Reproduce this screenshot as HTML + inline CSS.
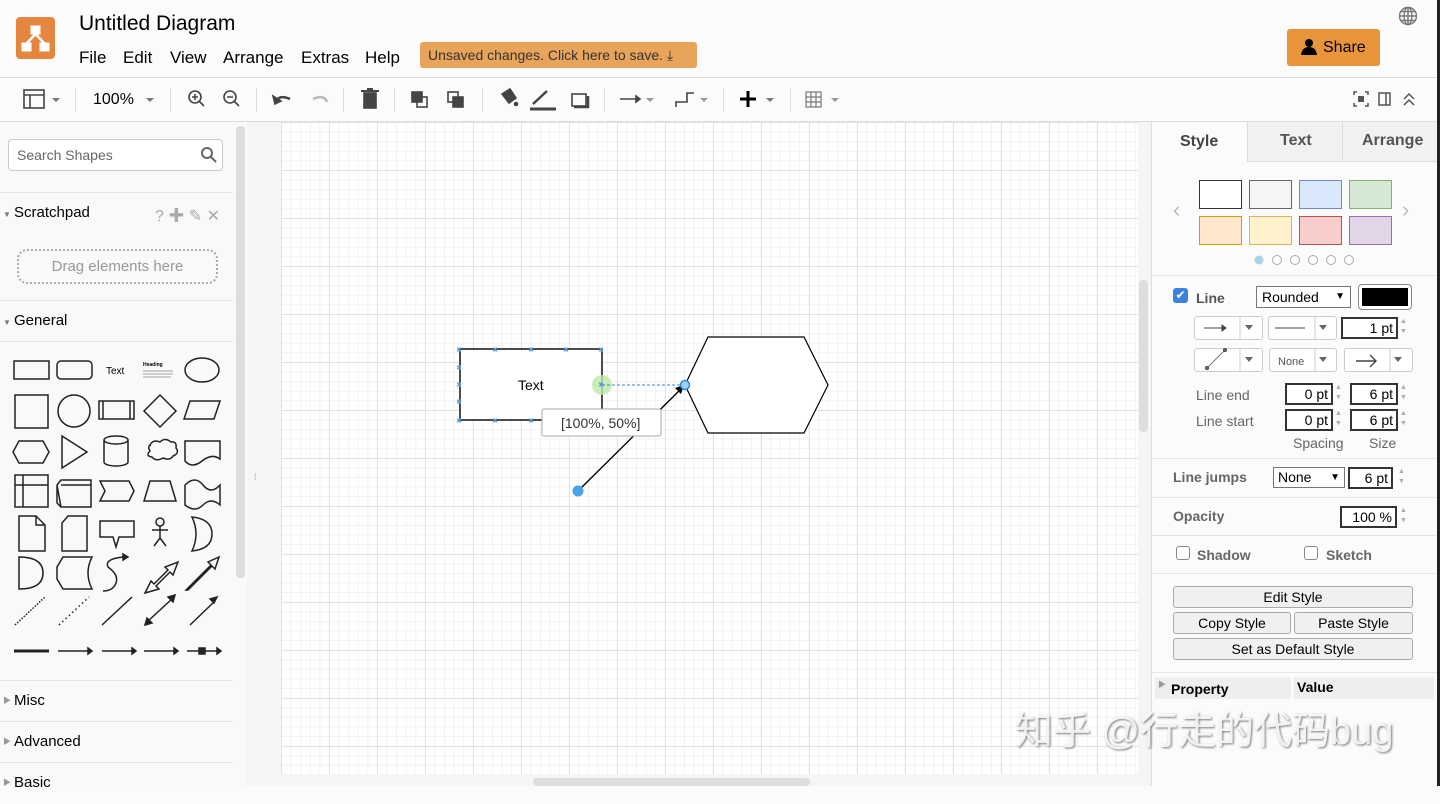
<!DOCTYPE html>
<html><head><meta charset="utf-8"><style>
*{box-sizing:border-box;margin:0;padding:0}
body{width:1440px;height:786px;overflow:hidden;background:#fbfbfb;font-family:"Liberation Sans","Noto Sans CJK SC",sans-serif;position:relative;color:#000}
.a{position:absolute}
.menu span{position:absolute;top:48px;font-size:17px}
.tb{position:absolute;top:77px;left:0;width:1440px;height:45px;border-top:1px solid #ddd;border-bottom:1px solid #ddd;background:#fbfbfb}
.sep{position:absolute;top:88px;width:1px;height:24px;background:#ddd}
.pt{position:absolute;height:22px;border:2px solid #333;background:#fff;font-size:14px;text-align:right;padding:1px 3px;line-height:16px}
.spin{position:absolute;width:10px;height:22px;font-size:7px;color:#aaa;line-height:10px}
.btn{position:absolute;height:22px;border:1px solid #aaa;border-radius:3px;background:#f0f0f0;font-size:14px;text-align:center;line-height:20px}
.dd{position:absolute;height:24px;border:1px solid #ccc;border-radius:3px;background:#fff}
.lbl{position:absolute;font-size:14px;color:#666}
.hd{position:absolute;left:0;width:233px;border-top:1px solid #e5e5e5;font-size:15px;padding-left:14px}
</style></head><body>
<!-- header -->
<div class="a" style="left:16px;top:17px;width:39px;height:42px;background:#e5863f;border-radius:4px"></div>
<svg class="a" style="left:16px;top:17px" width="39" height="42"><g fill="#fff" stroke="#fff"><rect x="15" y="9" width="9" height="8"/><rect x="6" y="26" width="9" height="8"/><rect x="24" y="26" width="9" height="8"/><path d="M19.5 17 L10 27 M19.5 17 L29 27" stroke-width="2.5" fill="none"/></g></svg>
<div class="a" style="left:79px;top:12px;font-size:21px">Untitled Diagram</div>
<div class="menu"><span style="left:79px">File</span><span style="left:123px">Edit</span><span style="left:170px">View</span><span style="left:223px">Arrange</span><span style="left:301px">Extras</span><span style="left:365px">Help</span></div>
<div class="a" style="left:420px;top:42px;width:277px;height:26px;background:#e8a45a;border-radius:3px;font-size:14px;color:#333;line-height:26px;padding-left:8px">Unsaved changes. Click here to save. ⤓</div>
<svg class="a" style="left:1398px;top:6px" width="20" height="20"><g fill="none" stroke="#777" stroke-width="1.4"><circle cx="10" cy="10" r="8.5"/><ellipse cx="10" cy="10" rx="4" ry="8.5"/><path d="M1.5 10h17M3 5.5h14M3 14.5h14M10 1.5v17"/></g></svg>
<div class="a" style="left:1287px;top:29px;width:93px;height:37px;background:#e8943b;border-radius:3px;font-size:16px;line-height:37px;padding-left:36px">Share</div>
<svg class="a" style="left:1300px;top:38px" width="18" height="18"><circle cx="9" cy="5" r="4"/><path d="M1 17 Q2 9 9 9 Q16 9 17 17Z"/></svg>
<!-- toolbar -->
<div class="tb"></div>
<svg class="a" style="left:0;top:78px" width="860" height="44" fill="none" stroke="#444" stroke-width="1.6">
<rect x="24" y="12" width="20" height="18"/><path d="M24 17h20M30 17v13"/><path d="M52 20l4 4 4-4z" fill="#777" stroke="none"/>
<path d="M146 20l4 4 4-4z" fill="#777" stroke="none"/>
<circle cx="195" cy="19" r="6"/><path d="M199 23l5 5M192 19h6M195 16v6"/>
<circle cx="230" cy="19" r="6"/><path d="M234 23l5 5M227 19h6"/>
<path d="M276 24q3-8 14-3" stroke-width="2.5"/><path d="M273 18l2 8 6-3z" fill="#444"/>
<path d="M327 24q-3-8-14-3" stroke="#bbb" stroke-width="2.5"/>
<rect x="364" y="15" width="12" height="15" fill="#444"/><path d="M361 13h18M367 11h6" stroke-width="2"/>
<rect x="412" y="14" width="10" height="10" fill="#444"/><rect x="417" y="19" width="10" height="10"/>
<rect x="448" y="14" width="10" height="10"/><rect x="453" y="19" width="10" height="10" fill="#444"/>
<path d="M502 16l8 -5 6 9-7 5z" fill="#444"/><circle cx="516" cy="26" r="1.5" fill="#444"/>
<path d="M533 26l14-13" stroke-width="2.5"/><path d="M530 31h26" stroke-width="3"/>
<rect x="572" y="16" width="14" height="12"/><path d="M574 29h14v-11" stroke-width="2.5"/>
<path d="M620 21h18"/><path d="M636 18l4 3-4 3z" fill="#444"/><path d="M646 20l4 4 4-4z" fill="#999" stroke="none"/>
<path d="M676 29v-5h11v-9h7"/><path d="M700 20l4 4 4-4z" fill="#999" stroke="none"/>
<path d="M748 13v16M740 21h16" stroke="#000" stroke-width="3"/><path d="M766 20l4 4 4-4z" fill="#777" stroke="none"/>
<rect x="806" y="14" width="15" height="15" stroke="#777" stroke-width="1.2"/><path d="M806 19h15M806 24h15M811 14v15M816 14v15" stroke="#777" stroke-width="1.2"/><path d="M831 20l4 4 4-4z" fill="#999" stroke="none"/>
</svg>
<div class="a" style="left:93px;top:91px;font-size:16px">100%</div>
<div class="sep" style="left:75px"></div><div class="sep" style="left:170px"></div><div class="sep" style="left:256px"></div><div class="sep" style="left:343px"></div><div class="sep" style="left:394px"></div><div class="sep" style="left:482px"></div><div class="sep" style="left:604px"></div><div class="sep" style="left:723px"></div><div class="sep" style="left:790px"></div>
<svg class="a" style="left:1350px;top:88px" width="70" height="22" fill="none" stroke="#555" stroke-width="1.5"><path d="M4 7V4h3M15 4h3v3M18 15v3h-3M7 18H4v-3"/><rect x="8" y="8" width="6" height="6" fill="#555" stroke="none"/><rect x="29" y="5" width="11" height="12"/><path d="M36 5v12"/><path d="M54 11l5-5 5 5M54 17l5-5 5 5"/></svg>
<!-- left sidebar -->
<div class="a" style="left:0;top:122px;width:247px;height:664px;background:#f8f9fb"></div>
<div class="a" style="left:236px;top:126px;width:9px;height:452px;background:#ddd;border-radius:4px"></div>
<div class="a" style="left:8px;top:139px;width:215px;height:32px;border:1px solid #ccc;border-radius:4px;background:#fff;font-size:14px;color:#666;line-height:30px;padding-left:8px">Search Shapes</div>
<svg class="a" style="left:200px;top:146px" width="18" height="18" fill="none" stroke="#666" stroke-width="2"><circle cx="7" cy="7" r="5"/><path d="M11 11l5 5"/></svg>
<div class="hd" style="top:192px;height:42px;line-height:40px">Scratchpad</div>
<div class="a" style="left:3px;top:210px;font-size:8px;color:#777">▼</div>
<div class="a" style="left:155px;top:202px;font-size:16px;color:#aaa">? ✚ ✎ ✕</div>
<div class="a" style="left:17px;top:249px;width:201px;height:35px;border:2px dotted #aaa;border-radius:10px;font-size:15px;color:#999;text-align:center;line-height:31px">Drag elements here</div>
<div class="hd" style="top:300px;height:42px;line-height:40px">General</div>
<div class="a" style="left:3px;top:318px;font-size:8px;color:#777">▼</div>
<div class="hd" style="top:341px;height:1px"></div>
<svg class="a" style="left:0;top:345px" width="233" height="325" fill="none" stroke="#222" stroke-width="1.5">
<rect x="14" y="16" width="35" height="18"/><rect x="57" y="16" width="35" height="18" rx="4"/><text x="106" y="29" font-size="10" fill="#000" stroke="none" font-family="Liberation Sans">Text</text><text x="143" y="21" font-size="5" fill="#000" stroke="none" font-family="Liberation Sans" font-weight="bold">Heading</text><path d="M143 26h30M143 29h30M143 32h28" stroke-width="0.7" stroke="#888"/><ellipse cx="202" cy="25" rx="17" ry="12"/>
<rect x="15" y="50" width="33" height="33"/><circle cx="74" cy="66" r="16"/><rect x="99" y="56" width="35" height="18"/><path d="M103 56v18M130 56v18"/><path d="M160 50l16 16-16 16-16-16z"/><path d="M190 56h30l-6 18h-30z"/>
<path d="M19 96h24l6 11-6 11H19l-6-11z"/><path d="M62 91l25 16-25 16z"/><path d="M104 95a12 4 0 0 1 24 0v22a12 4 0 0 1-24 0z M104 95a12 4 0 0 0 24 0"/><path d="M150 100q3-6 10-3 5-5 11 0 6-1 5 6 4 5-3 8-3 5-10 2-7 4-11-1-7-1-2-6-3-5 1-6z"/><path d="M185 96h35v18q-8-6-18 2t-17 0z"/>
<rect x="15" y="130" width="33" height="32"/><path d="M15 140h33M23 130v32"/><path d="M57 140l4-5h30v27H61z M57 140v18l4 4M61 140h30"/><path d="M100 136h29l5 10-5 10h-29l5-10z"/><path d="M150 136h20l6 20h-32z"/><path d="M185 140q10-10 18 0t17 0v20q-9-8-17 0t-18 0z"/>
<path d="M19 171h17l9 9v26H19z M36 171v9h9"/><path d="M68 171h19v35H62v-28z"/><path d="M100 176h34v16h-15l-3 10-3-10h-13z"/><circle cx="160" cy="177" r="4"/><path d="M160 181v12M152 185h16M160 193l-6 8M160 193l6 8"/><path d="M192 172q20 2 20 17t-20 17q8-17 0-34z"/>
<path d="M19 212q24 0 24 16t-24 16z"/><path d="M63 212h29q-8 16 0 32H63l-6-10v-12z"/><path d="M103 246q10 0 13-8t-8-16q-4-8 15-10" /><path d="M123 209l5 3-5 3z" fill="#222"/><path d="M145 248l6-12 3 3 14-14-3-3 13-5-5 13-3-3-14 14 3 3z"/><path d="M186 245l25-25-3-3 11-5-4 12-3-3-24 24z"/>
<path d="M15 280l30-28" stroke-dasharray="1.5 1.5"/><path d="M59 280l30-28" stroke-dasharray="1.5 3"/><path d="M102 280l30-28"/><path d="M147 277l26-24"/><path d="M145 280l2-7 5 5zM175 250l-2 7-5-5z" fill="#222"/><path d="M190 280l25-24"/><path d="M217 252l-7 2 4 4z" fill="#222"/>
<path d="M14 306h35" stroke-width="3"/><path d="M58 306h30M102 306h30M144 306h30M187 306h30"/><path d="M88 303l4 3-4 3zM132 303l4 3-4 3zM174 303l4 3-4 3zM217 303l4 3-4 3z" fill="#222"/><rect x="199" y="303" width="6" height="6" fill="#222"/>
</svg>
<div class="hd" style="top:680px;height:42px;line-height:40px">Misc</div>
<div class="hd" style="top:721px;height:42px;line-height:40px">Advanced</div>
<div class="hd" style="top:762px;height:42px;line-height:40px">Basic</div>
<div class="a" style="left:3px;top:695px;font-size:8px;color:#999">▶</div><div class="a" style="left:3px;top:736px;font-size:8px;color:#999">▶</div><div class="a" style="left:3px;top:777px;font-size:8px;color:#999">▶</div>
<!-- canvas -->
<div class="a" style="left:247px;top:122px;width:904px;height:664px;background:#f4f5f6"></div>
<div class="a" style="left:281px;top:122px;width:857px;height:652px;background-color:#fff;background-image:linear-gradient(#e3e3e3 1px,transparent 1px),linear-gradient(90deg,#e3e3e3 1px,transparent 1px),linear-gradient(#f1f1f1 1px,transparent 1px),linear-gradient(90deg,#f1f1f1 1px,transparent 1px);background-size:48px 48px,48px 48px,9.6px 9.6px,9.6px 9.6px;background-position:0 0"></div>
<div class="a" style="left:254px;top:472px;font-size:9px;color:#999">⁞</div>
<div class="a" style="left:1139px;top:280px;width:9px;height:152px;background:#ddd;border-radius:4px"></div>
<div class="a" style="left:533px;top:778px;width:277px;height:8px;background:#ddd;border-radius:4px"></div>
<svg class="a" style="left:440px;top:320px" width="400" height="190">
<rect x="20" y="29" width="142" height="71" fill="#fff" stroke="#000" stroke-width="1.4"/>
<text x="78" y="70" font-size="14" font-family="Liberation Sans">Text</text>
<path d="M268 17H364L388 65L364 113H268L245 65Z" fill="#fff" stroke="#000" stroke-width="1.2"/>
<circle cx="162" cy="65" r="10" fill="#bde8a8" opacity="0.8"/>
<path d="M162 65h82" stroke="#2a8cd8" stroke-dasharray="3 2"/>
<path d="M138 171L243 67" stroke="#000" stroke-width="1.4"/><path d="M244 65l-9 3 6 6z"/>
<circle cx="138" cy="171" r="5.5" fill="#4aa3e8"/>
<circle cx="245" cy="65" r="4.5" fill="#9ccff2" stroke="#2a8cd8" stroke-width="1.5"/>
<g stroke="#5b9bd5" stroke-width="1" font-size="7" fill="#5b9bd5"><text x="17" y="32">×</text><text x="53" y="32">×</text><text x="89" y="32">×</text><text x="124" y="32">×</text><text x="159" y="32">×</text><text x="17" y="50">×</text><text x="17" y="67">×</text><text x="17" y="84">×</text><text x="17" y="103">×</text><text x="53" y="103">×</text><text x="89" y="103">×</text><text x="159" y="67">×</text></g>
<rect x="102" y="89" width="119" height="27" rx="2" fill="#fff" stroke="#aaa"/>
<text x="121" y="108" font-size="14" font-family="Liberation Sans" fill="#333">[100%, 50%]</text>
</svg>
<!-- right panel -->
<div class="a" style="left:1151px;top:122px;width:286px;height:664px;background:#fbfbfb;border-left:1px solid #ddd"></div>
<div class="a" style="left:1437px;top:0;width:3px;height:786px;background:#222"></div>
<div class="a" style="left:1247px;top:122px;width:190px;height:40px;background:#f0f1f2;border-left:1px solid #ddd;border-bottom:1px solid #ddd"></div>
<div class="a" style="left:1342px;top:122px;width:1px;height:40px;background:#ddd"></div>
<div class="a" style="left:1180px;top:133px;font-size:16px;font-weight:bold;color:#444">Style</div>
<div class="a" style="left:1280px;top:132px;font-size:16px;font-weight:bold;color:#555">Text</div>
<div class="a" style="left:1362px;top:132px;font-size:16px;font-weight:bold;color:#555">Arrange</div>
<div class="a" style="left:1173px;top:197px;font-size:22px;color:#bbb">‹</div><div class="a" style="left:1402px;top:197px;font-size:22px;color:#bbb">›</div>
<div class="a" style="left:1199px;top:180px;width:43px;height:29px;background:#fff;border:1px solid #333"></div>
<div class="a" style="left:1249px;top:180px;width:43px;height:29px;background:#f5f5f5;border:1px solid #666"></div>
<div class="a" style="left:1299px;top:180px;width:43px;height:29px;background:#dae8fc;border:1px solid #6c8ebf"></div>
<div class="a" style="left:1349px;top:180px;width:43px;height:29px;background:#d5e8d4;border:1px solid #82b366"></div>
<div class="a" style="left:1199px;top:216px;width:43px;height:29px;background:#ffe6cc;border:1px solid #d79b00"></div>
<div class="a" style="left:1249px;top:216px;width:43px;height:29px;background:#fff2cc;border:1px solid #d6b656"></div>
<div class="a" style="left:1299px;top:216px;width:43px;height:29px;background:#f8cecc;border:1px solid #b85450"></div>
<div class="a" style="left:1349px;top:216px;width:43px;height:29px;background:#e1d5e7;border:1px solid #9673a6"></div>
<svg class="a" style="left:1250px;top:253px" width="110" height="14"><circle cx="9" cy="7" r="4.5" fill="#a6d4ea"/><g fill="none" stroke="#aaa"><circle cx="27" cy="7" r="4.5"/><circle cx="45" cy="7" r="4.5"/><circle cx="63" cy="7" r="4.5"/><circle cx="81" cy="7" r="4.5"/><circle cx="99" cy="7" r="4.5"/></g></svg>
<div class="a" style="left:1152px;top:275px;width:285px;height:1px;background:#e5e5e5"></div>
<div class="a" style="left:1173px;top:288px;width:15px;height:15px;background:#3b82e0;border-radius:3px;color:#fff;font-size:12px;text-align:center;line-height:15px">✔</div>
<div class="a" style="left:1196px;top:290px;font-size:14px;font-weight:bold;color:#555">Line</div>
<div class="a" style="left:1256px;top:286px;width:95px;height:22px;border:1px solid #777;background:#fff;font-size:14px;padding-left:5px;line-height:20px">Rounded <span style="position:absolute;right:5px;font-size:10px">▼</span></div>
<div class="a" style="left:1358px;top:284px;width:54px;height:26px;border:1px solid #888;border-radius:4px;background:#fff;padding:3px"><div style="background:#000;width:100%;height:100%"></div></div>
<div class="dd" style="left:1194px;top:316px;width:69px"></div><div class="dd" style="left:1268px;top:316px;width:69px"></div>
<div class="dd" style="left:1194px;top:348px;width:69px"></div><div class="dd" style="left:1269px;top:348px;width:68px"></div><div class="dd" style="left:1344px;top:348px;width:69px"></div>
<svg class="a" style="left:1194px;top:316px" width="220" height="58" fill="none" stroke="#444"><path d="M10 12h20"/><path d="M28 9l4 3-4 3z" fill="#444"/><path d="M46 0v24M121 0v24M46 32v24M121 32v24M196 32v24" stroke="#ccc"/><path d="M51 9l4 5 4-5zM125 9l4 5 4-5zM51 41l4 5 4-5zM125 41l4 5 4-5zM200 41l4 5 4-5z" fill="#666" stroke="none"/><path d="M81 12h30"/><path d="M13 52l18-18" stroke="#777"/><circle cx="13" cy="52" r="1.5" fill="#777"/><circle cx="31" cy="34" r="1.5" fill="#777"/><path d="M162 45h20M176 39l6 6-6 6" stroke-width="1.4"/></svg>
<div class="a" style="left:1278px;top:356px;font-size:11px;color:#555">None</div>
<div class="pt" style="left:1341px;top:317px;width:57px">1 pt</div>
<div class="spin" style="left:1400px;top:317px">▲<br>▼</div>
<div class="lbl" style="left:1196px;top:387px">Line end</div><div class="lbl" style="left:1196px;top:413px">Line start</div>
<div class="pt" style="left:1285px;top:383px;width:48px">0 pt</div><div class="spin" style="left:1335px;top:383px">▲<br>▼</div>
<div class="pt" style="left:1350px;top:383px;width:48px">6 pt</div><div class="spin" style="left:1400px;top:383px">▲<br>▼</div>
<div class="pt" style="left:1285px;top:409px;width:48px">0 pt</div><div class="spin" style="left:1335px;top:409px">▲<br>▼</div>
<div class="pt" style="left:1350px;top:409px;width:48px">6 pt</div><div class="spin" style="left:1400px;top:409px">▲<br>▼</div>
<div class="lbl" style="left:1293px;top:435px">Spacing</div><div class="lbl" style="left:1369px;top:435px">Size</div>
<div class="a" style="left:1152px;top:458px;width:285px;height:1px;background:#e5e5e5"></div>
<div class="lbl" style="left:1173px;top:469px;font-weight:bold">Line jumps</div>
<div class="a" style="left:1273px;top:467px;width:72px;height:21px;border:1px solid #777;background:#fff;font-size:14px;padding-left:4px;line-height:19px">None <span style="position:absolute;right:4px;font-size:10px">▼</span></div>
<div class="pt" style="left:1348px;top:467px;width:45px">6 pt</div><div class="spin" style="left:1398px;top:467px">▲<br>▼</div>
<div class="a" style="left:1152px;top:497px;width:285px;height:1px;background:#e5e5e5"></div>
<div class="lbl" style="left:1173px;top:508px;font-weight:bold">Opacity</div>
<div class="pt" style="left:1340px;top:506px;width:57px">100 %</div><div class="spin" style="left:1400px;top:506px">▲<br>▼</div>
<div class="a" style="left:1152px;top:535px;width:285px;height:1px;background:#e5e5e5"></div>
<div class="a" style="left:1176px;top:546px;width:14px;height:14px;border:1px solid #888;border-radius:3px;background:#fff"></div>
<div class="lbl" style="left:1197px;top:547px;font-weight:bold">Shadow</div>
<div class="a" style="left:1304px;top:546px;width:14px;height:14px;border:1px solid #888;border-radius:3px;background:#fff"></div>
<div class="lbl" style="left:1326px;top:547px;font-weight:bold">Sketch</div>
<div class="a" style="left:1152px;top:573px;width:285px;height:1px;background:#e5e5e5"></div>
<div class="btn" style="left:1173px;top:586px;width:240px">Edit Style</div>
<div class="btn" style="left:1173px;top:612px;width:118px">Copy Style</div>
<div class="btn" style="left:1294px;top:612px;width:119px">Paste Style</div>
<div class="btn" style="left:1173px;top:638px;width:240px">Set as Default Style</div>
<div class="a" style="left:1152px;top:672px;width:285px;height:1px;background:#e5e5e5"></div>
<div class="a" style="left:1155px;top:677px;width:136px;height:22px;background:#eee"></div>
<div class="a" style="left:1294px;top:677px;width:140px;height:22px;background:#eee"></div>
<div class="a" style="left:1158px;top:679px;font-size:8px;color:#999">▶</div>
<div class="a" style="left:1171px;top:681px;font-size:14px;font-weight:bold">Property</div>
<div class="a" style="left:1297px;top:679px;font-size:14px;font-weight:bold">Value</div>
<div class="a" style="left:1015px;top:700px;font-size:38px;color:rgba(255,255,255,0.85);text-shadow:1px 1px 2px #777;white-space:nowrap">知乎 @行走的代码bug</div>
</body></html>
